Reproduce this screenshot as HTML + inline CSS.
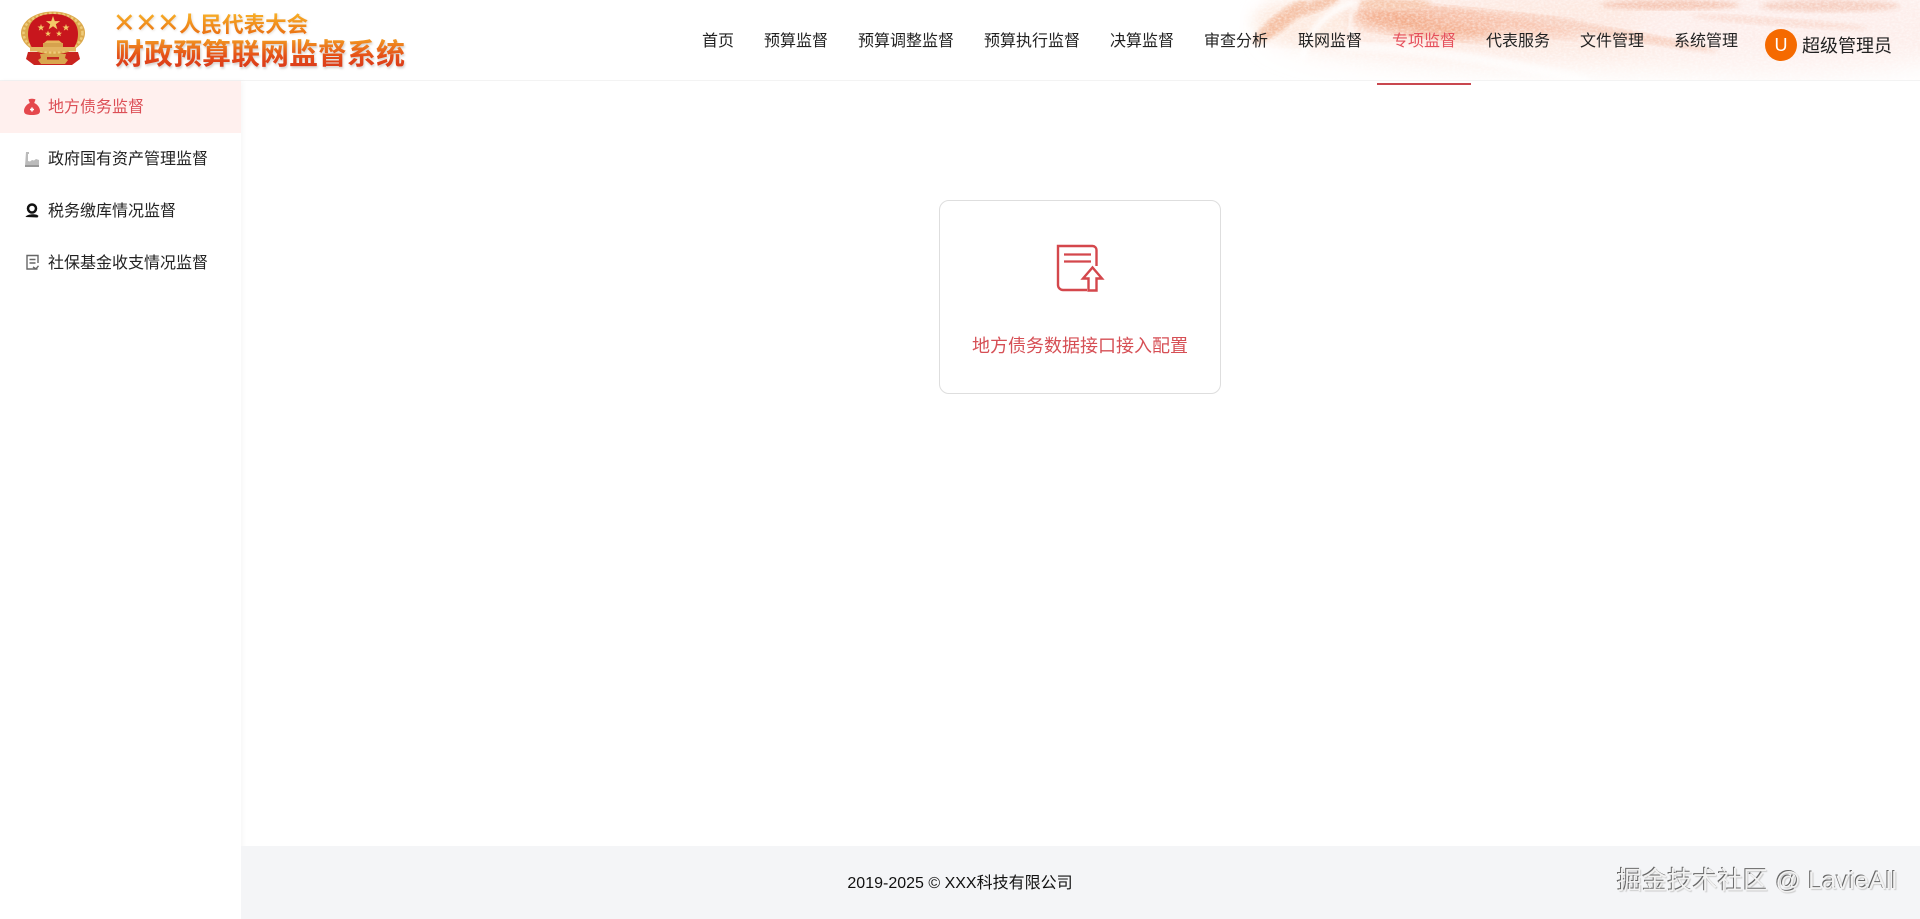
<!DOCTYPE html>
<html lang="zh-CN">
<head>
<meta charset="utf-8">
<title>财政预算联网监督系统</title>
<style>
*{margin:0;padding:0;box-sizing:border-box}
html,body{width:1920px;height:919px;overflow:hidden;background:#fff;font-family:"Liberation Sans","Noto Sans CJK SC",sans-serif;color:#222}
.abs{position:absolute}
#header{position:absolute;left:0;top:0;width:1920px;height:81px;background:#fff;border-bottom:1px solid #f3f3f3;overflow:hidden}
.nav{position:absolute;top:30px;font-size:16px;line-height:24px;white-space:nowrap;color:#222}
.t1,.t2{position:absolute;white-space:nowrap;font-weight:700;font-family:"Noto Sans CJK SC",sans-serif;-webkit-background-clip:text;background-clip:text;color:transparent}
.t1{left:113px;top:11px;font-size:21.5px;line-height:26px;background-image:linear-gradient(#f9b62a,#e9690f);width:204px}
.t2{left:115px;top:33px;font-size:29px;line-height:38px;background-image:linear-gradient(#f29a22 15%,#e54f17 60%,#d7331b);width:292px}
#side{position:absolute;left:0;top:81px;width:241px;height:838px;background:#fff;box-shadow:2px 0 5px rgba(0,0,0,.035)}
.item{position:absolute;left:0;width:241px;height:52px;line-height:54px;padding-left:48px;font-size:16px;color:#222}
.item.on{background:#fff0ee;color:#dc4f56}
#card{position:absolute;left:939px;top:200px;width:282px;height:194px;border:1px solid #dedede;border-radius:10px;background:#fff}
#cardt{position:absolute;left:972px;top:332px;width:216px;font-size:18px;line-height:28px;color:#d64f55;white-space:nowrap}
#foot{position:absolute;left:241px;top:846px;width:1679px;height:73px;background:#f4f5f7}
#foott{position:absolute;left:0;width:1920px;top:872px;text-align:center;font-size:16px;line-height:24px;color:#111}
#wm{position:absolute;left:1617px;top:865px;font-size:25px;letter-spacing:.2px;line-height:32px;white-space:nowrap;color:#f2f2f2;text-shadow:-1px -1px 0 #666,1px 1px 1px #ccc}
</style>
</head>
<body>
<div id="header">
  <svg class="abs" style="left:1190px;top:0" width="730" height="81" viewBox="0 0 730 81">
    <defs>
      <filter id="b8"><feGaussianBlur stdDeviation="7"/></filter>
      <filter id="b3"><feGaussianBlur stdDeviation="2.500"/></filter>
      <filter id="b14"><feGaussianBlur stdDeviation="14"/></filter>
      <filter id="grain" x="0" y="0" width="100%" height="100%">
        <feTurbulence type="fractalNoise" baseFrequency=".35 .55" numOctaves="2" seed="4"/>
        <feColorMatrix values="0 0 0 0 1  0 0 0 0 1  0 0 0 0 1  1.800 0 0 0 -.65"/>
      </filter>
      <linearGradient id="fade" x1="0" x2="1" y1="0" y2="0">
        <stop offset="0" stop-color="#fff" stop-opacity="1"/>
        <stop offset=".11" stop-color="#fff" stop-opacity="0"/>
      </linearGradient>
      <linearGradient id="fadeb" x1="0" x2="0" y1="0" y2="1">
        <stop offset=".5" stop-color="#fff" stop-opacity="0"/>
        <stop offset="1" stop-color="#fff" stop-opacity=".55"/>
      </linearGradient>
    </defs>
    <ellipse cx="420" cy="28" rx="340" ry="46" fill="#fde8e0" filter="url(#b14)"/>
    <ellipse cx="620" cy="30" rx="180" ry="48" fill="#fdeeeb" filter="url(#b14)"/>
    <ellipse cx="110" cy="22" rx="50" ry="22" fill="#fdeadf" filter="url(#b8)"/>
    <ellipse cx="235" cy="22" rx="75" ry="14" transform="rotate(6 235 22)" fill="#f3ab89" filter="url(#b8)"/>
    <ellipse cx="310" cy="22" rx="85" ry="10" transform="rotate(6 310 22)" fill="#f7c0a8" filter="url(#b8)"/>
    <ellipse cx="90" cy="22" rx="34" ry="8" transform="rotate(-38 90 22)" fill="#f5bfa2" filter="url(#b3)"/>
    <ellipse cx="125" cy="6" rx="26" ry="6" transform="rotate(-20 125 6)" fill="#f5c2a7" filter="url(#b3)"/>
    <path d="M112 60C118 30 135 12 165 2" fill="none" stroke="#fff" stroke-width="6" opacity=".85" filter="url(#b3)"/>
    <path d="M170 0C160 12 155 25 165 38" fill="none" stroke="#fff" stroke-width="5" opacity=".65" filter="url(#b3)"/>
    <ellipse cx="205" cy="4" rx="36" ry="6" fill="#f7c8ad" filter="url(#b3)"/>
    <ellipse cx="480" cy="5" rx="70" ry="5" fill="#f5c6b4" filter="url(#b3)"/>
    <ellipse cx="640" cy="6" rx="70" ry="6" fill="#f6cfc1" filter="url(#b3)"/>
    <ellipse cx="430" cy="34" rx="100" ry="5" transform="rotate(10 430 34)" fill="#f8d0c0" filter="url(#b3)"/>
    <ellipse cx="590" cy="22" rx="90" ry="4" transform="rotate(4 590 22)" fill="#fadcd2" filter="url(#b3)"/>
    <path d="M150 46C230 48 320 62 400 82" fill="none" stroke="#fff" stroke-width="10" opacity=".65" filter="url(#b3)"/>
    <rect x="0" y="0" width="730" height="81" filter="url(#grain)" opacity=".6"/>
    <rect x="0" y="0" width="730" height="81" fill="url(#fadeb)"/>
    <rect x="0" y="0" width="730" height="81" fill="url(#fade)"/>
  </svg>

  <svg class="abs" style="left:18px;top:10px" width="70" height="58" viewBox="0 0 70 58">
    <path d="M10 42h50l2 7-8 6H16l-8-6z" fill="#c9231f"/>
    <ellipse cx="35" cy="23" rx="32" ry="21.500" fill="#dba94c"/>
    <ellipse cx="35" cy="23" rx="29.500" ry="19.500" fill="none" stroke="#eecb7b" stroke-width="2.500" stroke-dasharray="2.500 2"/>
    <path d="M10 24C10 10 21 4 35 4s25 6 25 20c0 6-2 11-5 15H15c-3-4-5-9-5-15z" fill="#c8161d"/>
    <g fill="#f3c967">
      <path d="M35 6l1.800 5.100 5.300 0-4.300 3.200 1.600 5.100-4.400-3.100-4.400 3.100 1.600-5.100-4.300-3.200 5.300 0z"/>
      <path d="M23 14l.9 2.500h2.600l-2.100 1.600.8 2.500-2.200-1.500-2.200 1.500.8-2.500-2.100-1.600h2.600z"/>
      <path d="M48 14l.9 2.500h2.600l-2.100 1.600.8 2.500-2.200-1.500-2.200 1.500.8-2.500-2.100-1.600h2.600z"/>
      <path d="M30 20.500l.8 2.200h2.300l-1.900 1.400.7 2.200-1.900-1.300-1.900 1.300.7-2.200-1.900-1.400h2.300z"/>
      <path d="M41 20.500l.8 2.200h2.300l-1.900 1.400.7 2.200-1.900-1.300-1.900 1.300.7-2.200-1.900-1.400h2.300z"/>
    </g>
    <path d="M26 33l3-2.500h12l3 2.500z" fill="#e7b65c"/>
    <rect x="25" y="33" width="20" height="4" fill="#d6a24e"/>
    <rect x="12" y="37" width="46" height="4.500" fill="#e3b461"/>
    <path d="M22 44h26l-1 4 3 2-3 4H23l-3-4 3-2z" fill="#d9a64e"/>
    <rect x="29" y="47" width="12" height="2.500" fill="#c2271f"/>
  </svg>
  <div class="t1" style="filter:drop-shadow(1px 1px 1px rgba(150,120,90,.25))"><span style="font-family:'DejaVu Sans';font-size:27px;font-weight:700;letter-spacing:-.6px">✕✕✕</span>人民代表大会</div>
  <div class="t2" style="filter:drop-shadow(1px 2px 1px rgba(140,130,120,.35))">财政预算联网监督系统</div>

  <div class="nav" style="left:702px">首页</div>
  <div class="nav" style="left:764px">预算监督</div>
  <div class="nav" style="left:858px">预算调整监督</div>
  <div class="nav" style="left:984px">预算执行监督</div>
  <div class="nav" style="left:1110px">决算监督</div>
  <div class="nav" style="left:1204px">审查分析</div>
  <div class="nav" style="left:1298px">联网监督</div>
  <div class="nav" style="left:1392px;color:#e5505c">专项监督</div>
  <div class="nav" style="left:1486px">代表服务</div>
  <div class="nav" style="left:1580px">文件管理</div>
  <div class="nav" style="left:1674px">系统管理</div>
  <div class="abs" style="left:1765px;top:29px;width:32px;height:32px;border-radius:50%;background:#f56a00;color:#fff;font-size:18px;line-height:33px;text-align:center">U</div>
  <div class="nav" style="left:1802px;top:33px;font-size:18px;line-height:26px">超级管理员</div>
</div>
<div class="abs" style="left:1377px;top:83px;width:94px;height:2px;background:#c9474f"></div>

<div id="side">
  <div class="item on" style="top:0">地方债务监督</div>
  <div class="item" style="top:52px">政府国有资产管理监督</div>
  <div class="item" style="top:104px">税务缴库情况监督</div>
  <div class="item" style="top:156px">社保基金收支情况监督</div>
</div>
<svg class="abs" style="left:20px;top:95px" width="24" height="180" viewBox="0 0 24 180">
  <path d="M8.500 4.500c1.500-1 5.500-1 7 0l-1.300 3.500c3.500 1.500 5.800 4.800 5.800 8 0 3-2.500 4-8 4s-8-1-8-4c0-3.200 2.300-6.500 5.800-8z" fill="#e5484d"/>
  <path d="M10 14.500h4M12 12.500v4" stroke="#fff" stroke-width="1.600"/>
  <path d="M6 57h3v2h-1v7l2 .5 2-1.500 2 .5 2-1.500 3 1v6H5z" fill="#bbb"/>
  <path d="M5 72h14v-2H5z" fill="#999"/>
  <circle cx="12" cy="113.500" r="4" fill="none" stroke="#111" stroke-width="2.500"/>
  <path d="M5.500 122c1-3 11-4 13-1l-1 1.500z" fill="#111"/>
  <path d="M17.500 174H7v-13.500h11v7.500M9.500 164.500h6M9.500 168h6M13 172l3 1.800 2.500-3" fill="none" stroke="#666" stroke-width="1.400"/>
</svg>

<div id="card"></div>
<svg class="abs" style="left:1050px;top:240px" width="60" height="60" viewBox="1050 240 60 60">
  <path d="M1096.500 266V250a4 4 0 0 0-4-4H1058v39a5 5 0 0 0 5 5h24" fill="none" stroke="#d4474c" stroke-width="2.400"/>
  <path d="M1064 254.500h27M1064 261.500h27" fill="none" stroke="#d4474c" stroke-width="2.200"/>
  <path d="M1083 278.500l9.500-11 9.500 11h-5.500v12h-8v-12z" fill="#fff" stroke="#d4474c" stroke-width="2.400"/>
</svg>
<div id="cardt">地方债务数据接口接入配置</div>

<div id="foot"></div>
<div id="foott">2019-2025 © XXX科技有限公司</div>
<div id="wm">掘金技术社区 @ LavieAll</div>
</body>
</html>
